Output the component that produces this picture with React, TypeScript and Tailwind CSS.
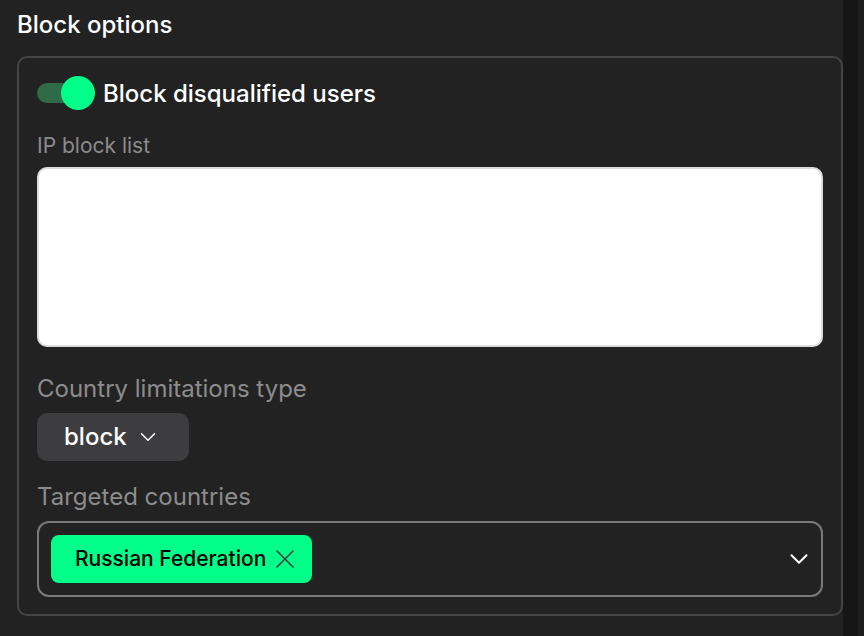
import { ChevronDown, X } from "lucide-react"

const font = { fontFamily: "Inter, 'Noto Sans', sans-serif" }

function Toggle({ on }: { on: boolean }) {
  return (
    <div className="relative h-[34px] w-[58px] shrink-0 flex items-center">
      <div className="h-[20px] w-[50px] rounded-full bg-[#2e6a46]" />
      <div
        className={
          on
            ? "absolute left-[24px] top-0 h-[34px] w-[34px] rounded-full bg-[#00fe88]"
            : "absolute left-0 top-0 h-[34px] w-[34px] rounded-full bg-[#9a9a9a]"
        }
      />
    </div>
  )
}

export default function App() {
  return (
    <div className="flex h-[636px] w-[864px] overflow-hidden bg-[#222222]" style={font}>
      <div className="w-[843px] shrink-0 pl-[17px]">
        <h2 className="pt-[10px] text-[24px] leading-[29px] font-medium text-white mb-[17px]">
          Block options
        </h2>

        <section className="rounded-[10px] border-2 border-[#454545] px-[18px] pt-[18px] pb-[17px]">
          {/* Toggle */}
          <div className="flex items-center gap-[8px]">
            <Toggle on />
            <span className="text-[24px] leading-[29px] font-medium text-white">
              Block disqualified users
            </span>
          </div>

          {/* IP list */}
          <label className="mt-[23px] block text-[21px] leading-[25px] text-[#8c8c8c]">
            IP block list
          </label>
          <textarea className="mt-[9px] block h-[180px] w-full resize-none rounded-[10px] border-2 border-[#dcdcdc] bg-white outline-none" />

          {/* Country type */}
          <label className="mt-[27px] block text-[24px] leading-[29px] text-[#8c8c8c]">
            Country limitations type
          </label>
          <button className="mt-[10px] flex h-[48px] w-[152px] items-center gap-[8px] rounded-[10px] bg-[#3d3d40] pl-[27px] text-[24px] font-medium text-white">
            block
            <ChevronDown className="h-[26px] w-[26px]" strokeWidth={1.4} />
          </button>

          {/* Targeted countries */}
          <label className="mt-[21px] block text-[24px] leading-[29px] text-[#8c8c8c]">
            Targeted countries
          </label>
          <div className="mt-[10px] flex h-[76px] items-center justify-between rounded-[12px] border-2 border-[#7a7a7a] pl-[12px] pr-[7px]">
            <div className="flex h-[48px] items-center gap-[3px] rounded-[8px] bg-[#00fe88] pl-[24px] pr-[11px]">
              <span className="text-[21px] font-medium text-black">Russian Federation</span>
              <X className="h-[32px] w-[32px] text-[#3a3a3a]" strokeWidth={1.1} />
            </div>
            <ChevronDown className="h-[30px] w-[30px] text-white" strokeWidth={1.6} />
          </div>
        </section>
      </div>
      <div className="w-[15px] shrink-0 bg-[#161616]" />
      <div className="flex-1 bg-[#1e1e1e]" />
    </div>
  )
}
